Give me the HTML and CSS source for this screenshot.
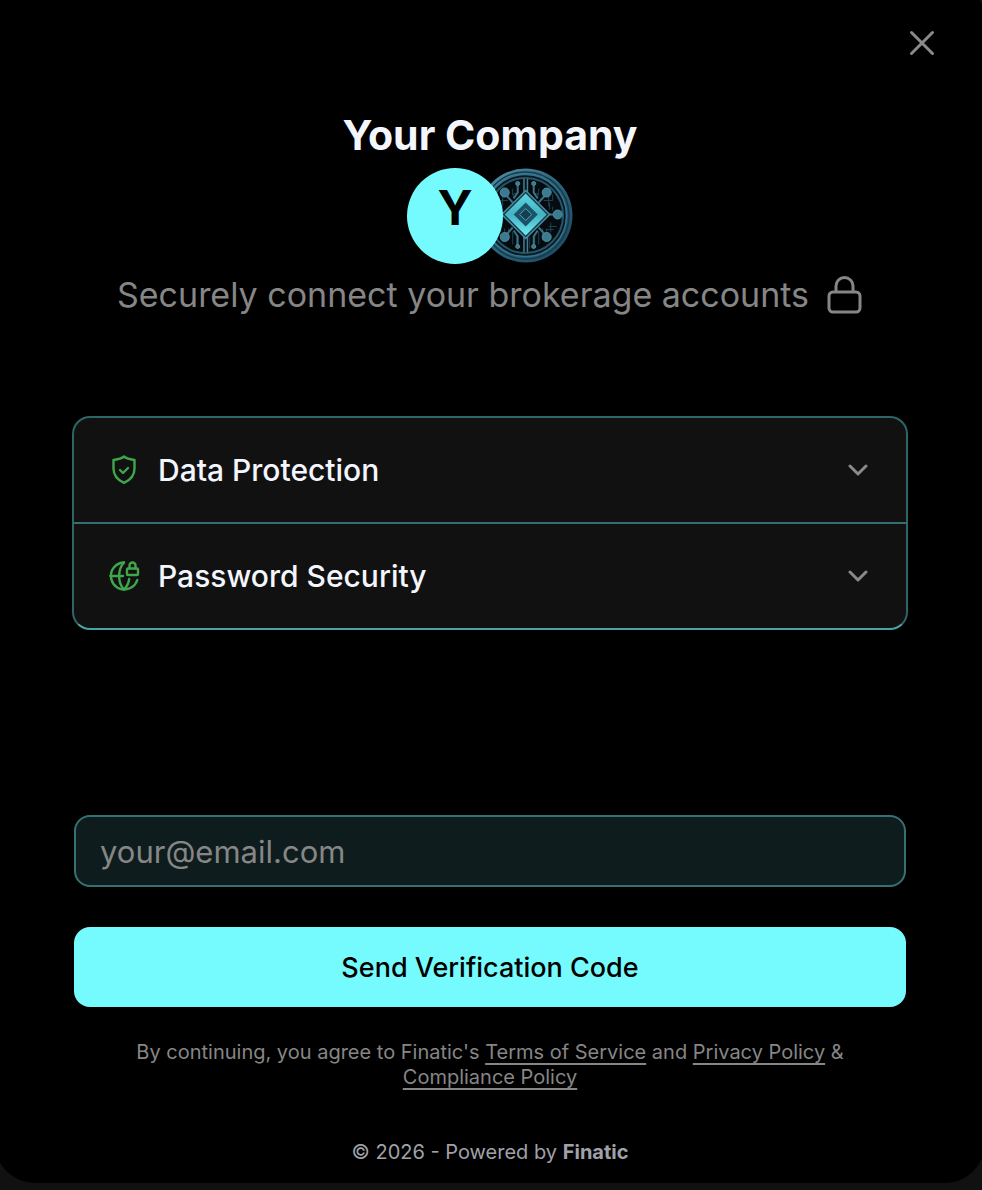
FILE: index.html
```html
<!DOCTYPE html>
<html lang="en">
<head>
  <meta charset="UTF-8" />
  <meta name="viewport" content="width=device-width, initial-scale=1" />
  <title>Connect - Your Company</title>
  <link rel="stylesheet" href="styles.css">
</head>
<body>
  <main class="modal">
    <button class="close" type="button" aria-label="Close">
      <svg viewBox="0 0 26 26" width="26" height="26"><path d="M2.500 2.500l21 21M23.500 2.500l-21 21" /></svg>
    </button>

    <!-- Company header -->
    <header class="header">
      <h1>Your Company</h1>
      <div class="logos">
        <div class="avatar">Y</div>
        <svg class="coin" viewBox="0 0 96 96" width="96" height="96" aria-hidden="true">
          <defs>
            <linearGradient id="rim" x1="0" y1="0" x2="1" y2="1">
              <stop offset="0" stop-color="#5596ad" />
              <stop offset="0.5" stop-color="#2b647c" />
              <stop offset="1" stop-color="#1b465e" />
            </linearGradient>
            <linearGradient id="gem" x1="0" y1="0" x2="0" y2="1">
              <stop offset="0" stop-color="#5cd6e0" />
              <stop offset="0.5" stop-color="#45b2c2" />
              <stop offset="1" stop-color="#6eecf2" />
            </linearGradient>
          </defs>
          <circle cx="48.500" cy="47.500" r="47" fill="url(#rim)" />
          <circle cx="48.500" cy="47.500" r="43.500" fill="none" stroke="#153a4b" stroke-width="1.500" />
          <circle cx="48.500" cy="47.500" r="41" fill="#0a1820" stroke="#35718a" stroke-width="1.500" />
          <circle cx="48.500" cy="47.500" r="37.500" fill="#060b10" stroke="#24566a" stroke-width="2" />
          <g transform="translate(0.700 -1.500)">
            <!-- fine circuit traces -->
            <g fill="none" stroke="#1c4353" stroke-width="1">
              <path d="M56 20v7h4v5M61 22v7M65 29h6v5h4M66 34h5v6M72 36v7M75 40v4M57 79v-10M61 78v-13M65 74v-12M69 72v-10M71 60h8M73 56v10M68 63h8M75 28v6M52 70v12" />
              <path d="M40 20v7h-4v5M35 22v7M31 29h-6v5h-4M30 34h-5v6M39 79v-10M35 78v-13M31 74v-12M27 72v-10M25 60h-8M23 56v10" />
            </g>
            <g fill="none" stroke="#3a7084" stroke-width="2">
              <path d="M61 36l8-9M61 61l8 9M35 36l-8-9M35 61l-8 9M60 32l-4-6v-8M60 64l-4 6v10M36 32l4-6v-8M36 64l4 6v10M71 48h9M25 48h-9" />
              <path d="M48 12v20M48 66v20" stroke="#447e91" stroke-width="5" />
              <path d="M48 12v20M48 66v20" stroke="#07131a" />
            </g>
            <g fill="#3b7a90" stroke="#4c8da0" stroke-width="1">
              <circle cx="69" cy="26" r="4.500" />
              <circle cx="69" cy="70.500" r="4.500" />
              <circle cx="27" cy="26" r="4.500" />
              <circle cx="27" cy="70.500" r="4.500" />
              <circle cx="80" cy="48" r="4.500" />
              <circle cx="56" cy="17" r="2" />
              <circle cx="56" cy="80" r="2" />
              <circle cx="40" cy="17" r="2" />
              <circle cx="40" cy="80" r="2" />
            </g>
            <path d="M48 24l24 24-24 24-24-24z" fill="#153b4c" stroke="#4c8da0" stroke-width="1.500" />
            <path d="M48 27l21 21-21 21-21-21z" fill="url(#gem)" />
            <path d="M48 36l12 12-12 12-12-12z" fill="#1c5167" />
            <path d="M48 42l6 6-6 6-6-6z" fill="#153e51" stroke="#4aa6b8" stroke-width="1" />
          </g>
        </svg>
      </div>
      <p class="subtitle">
        Securely connect your brokerage accounts
        <svg viewBox="0 0 36 38" width="36" height="38" aria-hidden="true">
          <rect x="2" y="16" width="31" height="20" rx="4" />
          <path d="M9 16V10a8.500 8.500 0 0 1 17 0v6" />
        </svg>
      </p>
    </header>

    <!-- Security info -->
    <section class="accordion">
      <details>
        <summary>
          <svg class="icon" viewBox="0 0 32 32" width="32" height="32" aria-hidden="true">
            <path d="M16 3C13 5.500 9 6 5.500 6.500V15c0 7 4 11.500 10.500 14.300C22.500 26.500 26.500 22 26.500 15V6.500C23 6 19 5.500 16 3z" transform="translate(0 -0.500)" />
            <path d="M12 16l3 3 5-5" />
          </svg>
          <span>Data Protection</span>
          <svg class="chevron" viewBox="0 0 20 12" width="20" height="12" aria-hidden="true"><path d="M2 2l8 8 8-8" /></svg>
        </summary>
      </details>
      <details>
        <summary>
          <svg class="icon" viewBox="0 0 32 32" width="32" height="32" aria-hidden="true">
            <path d="M16 2.500A13.500 13.500 0 1 0 29.300 20" />
            <path d="M16 2.500c-6.500 7-6.500 20 0 27 3-3 4.800-7 5.200-10.500M2.500 16H15" />
            <rect x="19" y="8.500" width="11" height="6.500" rx="1" />
            <path d="M21.500 8.500V5.500a3 3 0 0 1 6 0v3" />
          </svg>
          <span>Password Security</span>
          <svg class="chevron" viewBox="0 0 20 12" width="20" height="12" aria-hidden="true"><path d="M2 2l8 8 8-8" /></svg>
        </summary>
      </details>
    </section>

    <!-- Email sign in -->
    <form class="form">
      <input type="email" id="email" aria-label="Email address" placeholder="your@email.com" />
      <button class="submit" type="submit">Send Verification Code</button>
    </form>

    <p class="legal">By continuing, you agree to Finatic's <a href="#terms">Terms of Service</a> and <a href="#privacy">Privacy Policy</a> &amp; <a href="#compliance">Compliance Policy</a></p>
    <footer class="footer">© 2026 - Powered by <strong>Finatic</strong></footer>
  </main>
</body>
</html>
```
FILE: styles.css
```css
* {
  box-sizing: border-box;
}
body {
  margin: 0;
  background: #111111;
  color: #f4f6fd;
  font-family: Inter, "Liberation Sans", sans-serif;
  overflow-x: hidden;
}
/* the card bleeds a little past the window on the top and sides */
.modal {
  position: relative;
  margin: -20px -3px 0 -5px;
  padding: 127px 77px 16px;
  background: #000;
  border-radius: 40px;
}
.close {
  position: absolute;
  top: 50px;
  right: 50px;
  padding: 0;
  border: none;
  background: none;
  line-height: 0;
  cursor: pointer;
}
.close svg {
  fill: none;
  stroke: #8a8a8a;
  stroke-width: 3;
  stroke-linecap: round;
}
.header {
  text-align: center;
}
h1 {
  margin: 0;
  font-size: 41px;
  line-height: 56px;
  font-weight: 700;
}
.logos {
  display: flex;
  justify-content: center;
  margin-top: 5px;
}
.avatar {
  position: relative;
  z-index: 1;
  width: 96px;
  height: 96px;
  border-radius: 50%;
  background: #75fbfd;
  color: #000;
  font-size: 48px;
  line-height: 80px;
  font-weight: 700;
}
.coin {
  margin-left: -26px;
}
.subtitle {
  display: flex;
  align-items: center;
  justify-content: center;
  gap: 18px;
  margin: 8px 0 0;
  color: #868686;
  font-size: 34px;
  line-height: 46px;
}
.subtitle svg {
  fill: none;
  stroke: #868686;
  stroke-width: 3;
}
.accordion {
  margin-top: 98px;
  border: 2px solid #2e6566;
  border-bottom-color: #49a3a4;
  border-radius: 18px;
  background: #111111;
}
details + details {
  border-top: 2px solid #376d70;
}
summary {
  display: flex;
  align-items: center;
  gap: 18px;
  height: 104px;
  padding: 0 38px 0 34px;
  font-size: 30px;
  font-weight: 500;
  list-style: none;
  cursor: pointer;
}
summary span {
  flex: 1;
}
.icon,
.chevron {
  fill: none;
  stroke: #40a64b;
  stroke-width: 3;
  stroke-linecap: round;
  stroke-linejoin: round;
}
.icon {
  stroke-width: 2.4;
}
.chevron {
  stroke: #8a8a8a;
}
.form {
  display: flex;
  flex-direction: column;
  gap: 40px;
  margin: 185px 2px 0;
}
.form input {
  width: 100%;
  height: 72px;
  padding: 0 24px;
  border: 2px solid #357173;
  border-radius: 16px;
  background: #0f1c1d;
  color: #f4f6fd;
  font-family: inherit;
  font-size: 31px;
}
.form input::placeholder {
  color: #868686;
  opacity: 1;
}
.submit {
  height: 80px;
  border: none;
  border-radius: 16px;
  background: #75fbfd;
  color: #000;
  font-family: inherit;
  font-size: 27px;
  font-weight: 500;
  cursor: pointer;
}
.legal {
  margin: 33px 40px 0;
  color: #868686;
  font-size: 20px;
  line-height: 25px;
  text-align: center;
}
.legal a {
  color: inherit;
  text-decoration-thickness: 2px;
  text-underline-offset: 4px;
}
.footer {
  margin-top: 47px;
  color: #a1a1aa;
  font-size: 20px;
  line-height: 30px;
  text-align: center;
}
```
